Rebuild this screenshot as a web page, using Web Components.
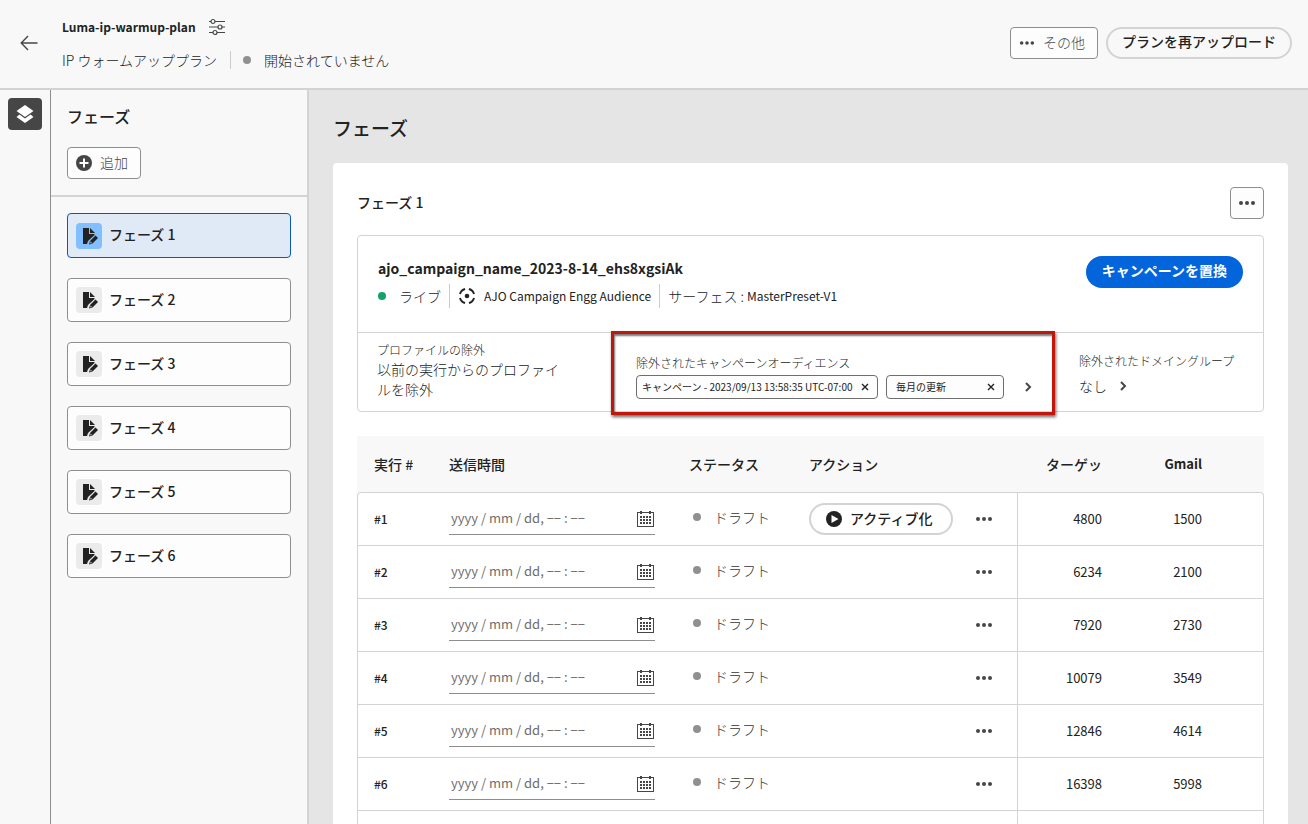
<!DOCTYPE html>
<html lang="ja">
<head>
<meta charset="utf-8">
<meta name="viewport" content="width=device-width, initial-scale=1">
<title>Luma-ip-warmup-plan</title>
<style>
  html, body { height: 100%; margin: 0; }
  body {
    font: 14px/20px "Noto Sans CJK JP", "Noto Sans", sans-serif;
    color: #222;
    background: #f8f8f8;
    --line: #d3d3d3;
    --edge: #8e8e8e;
    --soft: #464646;
    --accent: #0265dc;
  }
</style>
</head>
<body>
<warmup-app></warmup-app>

<script>
const define = (name, html, setup) => {
  const template = document.createElement('template');
  template.innerHTML = '<style>*,*::before,*::after{box-sizing:border-box}h1,h2,h3,p{margin:0;font-size:inherit;font-weight:inherit}button,input{font:inherit;color:inherit;margin:0}button{cursor:pointer}</style>' + html;
  customElements.define(name, class extends HTMLElement {
    constructor() {
      super();
      this.attachShadow({ mode: 'open' }).append(template.content.cloneNode(true));
    }
    connectedCallback() {
      if (setup && !this.ready) { this.ready = true; setup(this, this.shadowRoot); }
    }
  });
};

/* ---------- icons ---------- */
const icons = {
  back: [18, '<path d="M17.500 9H1.500M8 2 1.200 9 8 16" fill="none" stroke="currentColor" stroke-width="1.400"/>'],
  sliders: [18, '<g fill="none" stroke="currentColor" stroke-width="1.200"><path d="M1 3.500h2M7 3.500h10M1 9h9M14 9h3M1 14.500h4M9 14.500h8"/><circle cx="5" cy="3.500" r="2"/><circle cx="12" cy="9" r="2"/><circle cx="7" cy="14.500" r="2"/></g>'],
  layers: [18, '<path d="M9 0 17.500 6 9 12 .5 6z" fill="currentColor"/><path d="M3.500 9.500.5 12 9 18l8.500-6-3-2.500L9 13.500z" fill="currentColor"/>'],
  add: [16, '<circle cx="8" cy="8" r="8" fill="currentColor"/><path d="M8 3.500v9M3.500 8h9" stroke="#fff" stroke-width="2"/>'],
  more: [18, '<g fill="currentColor"><circle cx="3" cy="9" r="2"/><circle cx="9" cy="9" r="2"/><circle cx="15" cy="9" r="2"/></g>'],
  edit: [18, '<path d="M3 1h6v6h5.500v1L8 14l-1 3H3z" fill="currentColor"/><path d="M10 1v5h5z" fill="currentColor"/><path d="m15.500 8.500 2.500 2.500-5.500 5.500-3.500 1 1-3.500z" fill="currentColor"/><path d="m10.500 14.300 1.700 1.700-2 .6z" fill="#aaa"/>'],
  target: [18, '<circle cx="9" cy="9" r="2.300" fill="currentColor"/><circle cx="9" cy="9" r="7.300" fill="none" stroke="currentColor" stroke-width="1.900" pathLength="80" stroke-dasharray="13 7" stroke-dashoffset="-3.500"/>'],
  calendar: [18, '<g fill="currentColor" shape-rendering="crispEdges"><path d="M0 2h17v15H0zM1 3v13h15V3z" fill-rule="evenodd"/><path d="M3 1h2v3H3zM12 1h2v3h-2z"/><path d="M3 6h2v2H3zM6 6h2v2H6zM9 6h2v2H9zM12 6h2v2h-2zM3 9h2v2H3zM6 9h2v2H6zM9 9h2v2H9zM12 9h2v2h-2zM3 12h2v2H3zM6 12h2v2H6zM9 12h2v2H9zM12 12h2v2h-2z"/></g>'],
  play: [16, '<circle cx="8" cy="8" r="8" fill="currentColor"/><path d="M5.500 4v8L12.500 8z" fill="#fff"/>'],
  cross: [8, '<path d="M1 1l6 6M7 1 1 7" stroke="currentColor" stroke-width="1.400"/>'],
  chevron: [10, '<path d="M3 1l4 4-4 4" fill="none" stroke="currentColor" stroke-width="2"/>']
};
define('ui-icon', '<style>:host{display:inline-flex;flex:none}svg{display:block}</style>', (el, root) => {
  const [box, art] = icons[el.getAttribute('name')];
  const size = el.getAttribute('size') || box;
  root.innerHTML += `<svg width="${size}" height="${size}" viewBox="0 0 ${box} ${box}" aria-hidden="true">${art}</svg>`;
});

/* ---------- small parts ---------- */
define('ui-button', `
<style>
  :host { display: inline-flex; flex: none; }
  button { display: inline-flex; align-items: center; justify-content: center; gap: 8px; height: 32px;
    padding: 0 12px 0 8px; border: 1px solid var(--edge); border-radius: 4px; background: #fdfdfd;
    color: var(--soft); font-weight: 300; white-space: nowrap; }
  ::slotted(span) { padding-bottom: 2px; }
  :host([kind=icon]) button { width: 34px; padding: 0; }
  :host([kind=pill]) button, :host([kind=header]) button { border: 2px solid var(--line); border-radius: 16px; padding: 0 14px; font-weight: 500; color: #222; background: none; }
  :host([kind=pill]) button { padding: 0 19px 0 15px; }
  :host([kind=accent]) button { border: 0; border-radius: 16px; padding: 0 16px; font-weight: 700; color: #fff; background: var(--accent); }
  :host([kind=quiet]) button { border: 0; width: 24px; height: 24px; padding: 0; background: none; }
  :host([kind=header]) ::slotted(span), :host([kind=accent]) ::slotted(span) { padding-bottom: 4px; }
</style>
<button type="button"><slot></slot></button>`, (el, root) => {
  if (el.hasAttribute('label')) root.querySelector('button').setAttribute('aria-label', el.getAttribute('label'));
});

define('status-light', `
<style>
  :host { display: inline-flex; align-items: center; font-weight: 300; white-space: nowrap; }
  i { width: 8px; height: 8px; border-radius: 50%; background: var(--dot, #909090); margin-right: var(--dot-gap, 13px); }
</style>
<i></i><slot></slot>`);

define('ui-tag', `
<style>
  :host { display: inline-flex; align-items: center; justify-content: space-between; gap: 8px; height: 24px;
    padding: 0 8px 0 5px; border: 1px solid #6e6e6e; border-radius: 4px; background: #fdfdfd;
    font-size: 10px; line-height: 16px; white-space: nowrap; }
  button { display: flex; padding: 0; border: 0; background: none; }
</style>
<slot></slot><button type="button" aria-label="削除"><ui-icon name="cross"></ui-icon></button>`);

/* ---------- header ---------- */
define('app-header', `
<style>
  :host { display: block; }
  header { display: flex; align-items: center; height: 90px; padding: 0 16px 2px 20px; border-bottom: 2px solid var(--line); }
  .back { display: flex; padding: 0; border: 0; background: none; color: var(--soft); }
  .plan { flex: 1; display: grid; gap: 13px; margin-left: 24px; }
  .title, .meta, .actions { display: flex; align-items: center; }
  .title { gap: 12px; color: #222; }
  h1 { font-size: 12px; font-weight: 700; }
  .title ui-icon { color: var(--soft); }
  .meta { font-weight: 300; }
  hr { width: 1px; height: 18px; margin: 0 12px 0 13px; border: 0; background: #ccc; }
  .actions { gap: 8px; }
</style>
<header>
  <button class="back" type="button" aria-label="戻る"><ui-icon name="back"></ui-icon></button>
  <div class="plan">
    <div class="title"><h1>Luma-ip-warmup-plan</h1><ui-icon name="sliders"></ui-icon></div>
    <div class="meta"><span>IP ウォームアッププラン</span><hr><status-light>開始されていません</status-light></div>
  </div>
  <div class="actions">
    <ui-button><ui-icon name="more" size="16"></ui-icon><span>その他</span></ui-button>
    <ui-button kind="header"><span>プランを再アップロード</span></ui-button>
  </div>
</header>`);

/* ---------- left side ---------- */
define('icon-rail', `
<style>
  :host { display: block; flex: none; width: 51px; padding: 8px; border-right: 1px solid var(--edge); box-sizing: border-box; }
  button { display: grid; place-items: center; width: 34px; height: 32px; padding: 0; border: 0; border-radius: 4px; background: #464646; color: #fff; }
</style>
<button type="button" aria-label="フェーズ"><ui-icon name="layers"></ui-icon></button>`);

define('phase-item', `
<style>
  :host { display: block; }
  button { display: flex; align-items: center; gap: 7px; width: 100%; height: 44px; padding: 0 8px;
    border: 1px solid var(--edge); border-radius: 4px; background: #fdfdfd; font-weight: 500; text-align: left; }
  .mark { display: grid; place-items: center; width: 26px; height: 26px; border-radius: 4px; background: #ebebeb; }
  .name { padding-bottom: 3px; }
  :host([selected]) button { height: 45px; border-color: #0d58b4; background: #e0eaf7; }
  :host([selected]) .mark { background: #82bfff; }
</style>
<button type="button"><span class="mark"><ui-icon name="edit"></ui-icon></span><span class="name"><slot></slot></span></button>`);

define('phase-sidebar', `
<style>
  :host { display: block; flex: none; width: 258px; border-right: 2px solid var(--line); box-sizing: border-box; }
  .head { padding: 16px 16px 16px; border-bottom: 2px solid var(--line); }
  h2 { margin-bottom: 21px; font-size: 16px; font-weight: 500; }
  nav { display: grid; gap: 20px; padding: 16px; }
</style>
<div class="head"><h2>フェーズ</h2><ui-button><ui-icon name="add"></ui-icon><span>追加</span></ui-button></div>
<nav aria-label="フェーズ">
  <phase-item selected>フェーズ 1</phase-item>
  <phase-item>フェーズ 2</phase-item>
  <phase-item>フェーズ 3</phase-item>
  <phase-item>フェーズ 4</phase-item>
  <phase-item>フェーズ 5</phase-item>
  <phase-item>フェーズ 6</phase-item>
</nav>`);

/* ---------- campaign ---------- */
define('campaign-summary', `
<style>
  :host { display: block; border: 1px solid var(--line); border-radius: 4px; }
  .top { display: flex; justify-content: space-between; align-items: flex-start; height: 97px; padding: 20px; border-bottom: 1px solid var(--line); }
  h3 { font-size: 14px; line-height: 24px; font-weight: 700; }
  .meta { display: flex; align-items: center; height: 32px; font-size: 12px; white-space: nowrap; }
  .meta ui-icon { margin-right: 8px; }
  .meta b { font-weight: 400; }
  .meta span { font-size: 14px; font-weight: 300; }
  status-light { --dot: #12a366; font-size: 14px; }
  hr { width: 1px; height: 24px; margin: 0 8px; border: 0; background: #ccc; }
  .rules { display: grid; grid-template-columns: 253px 1fr 208px; height: 78px; }
  .rule { position: relative; min-width: 0; padding: 8px 48px 0 19px; font-weight: 300; }
  .rule p { font-size: 12px; line-height: 18px; }
  .mid { padding: 21px 0 0 25px; }
  .mid::after { content: ""; position: absolute; inset: -2px 0 -4px 0; border: 3px solid #c0160c; box-shadow: 1px 2px 3px #0009, inset 1px 2px 2px #0008; pointer-events: none; }
  .tags { display: flex; align-items: center; gap: 8px; margin-top: 3px; font-weight: 400; }
  .tags ui-tag:first-child { width: 242px; }
  .tags ui-tag + ui-tag { width: 118px; padding-left: 9px; }
  .tags ui-button { margin-left: 4px; }
  .last { padding: 19px 0 0 24px; white-space: nowrap; }
  .value { display: flex; align-items: center; margin-top: 4px; gap: 4px; color: #222; }
  .rule ui-button { color: var(--soft); }
</style>
<div class="top">
  <div>
    <h3>ajo_campaign_name_2023-8-14_ehs8xgsiAk</h3>
    <div class="meta"><status-light>ライブ</status-light><hr><ui-icon name="target"></ui-icon><b>AJO Campaign Engg Audience</b><hr><span>サーフェス :&nbsp;</span><b>MasterPreset-V1</b></div>
  </div>
  <ui-button kind="accent"><span>キャンペーンを置換</span></ui-button>
</div>
<div class="rules">
  <div class="rule"><p>プロファイルの除外</p><div>以前の実行からのプロファイルを除外</div></div>
  <div class="rule mid"><p>除外されたキャンペーンオーディエンス</p>
    <div class="tags"><ui-tag>キャンペーン - 2023/09/13 13:58:35 UTC-07:00</ui-tag><ui-tag>毎月の更新</ui-tag><ui-button kind="quiet" label="オーディエンスを表示"><ui-icon name="chevron"></ui-icon></ui-button></div></div>
  <div class="rule last"><p>除外されたドメイングループ</p><div class="value">なし<ui-button kind="quiet" label="ドメイングループを表示"><ui-icon name="chevron"></ui-icon></ui-button></div></div>
</div>`);

/* ---------- runs ---------- */
define('run-date', `
<style>
  :host { display: block; }
  label { display: flex; align-items: center; width: 206px; height: 32px; border-bottom: 1px solid var(--edge); color: var(--soft); }
  input { flex: 1; min-width: 0; height: 28px; padding: 0 2px 3px; border: 0; background: none; outline: 0; font-size: 13px; }
  input::placeholder { color: #6e6e6e; opacity: 1; }
</style>
<label><input type="text" aria-label="送信時間" placeholder="yyyy / mm / dd, −− : −−"><ui-icon name="calendar"></ui-icon></label>`);

define('run-table', `
<style>
  :host { display: block; }
  table { width: 100%; table-layout: fixed; border-collapse: separate; border-spacing: 0; }
  th, td { padding: 0 0 0 16px; text-align: left; }
  th { height: 56px; font-weight: 500; background: #f8f8f8; }
  td { height: 53px; border-top: 1px solid var(--line); font-size: 13px; }
  tbody td:first-child { border-left: 1px solid var(--line); }
  thead th:first-child { padding-left: 17px; }
  tbody td:last-child { border-right: 1px solid var(--line); }
  tbody tr:first-child td:first-child { border-top-left-radius: 4px; }
  tbody tr:first-child td:last-child { border-top-right-radius: 4px; }
  td.num { border-left: 1px solid var(--line); }
  .num, .mail { text-align: right; padding: 0 16px 0 0; }
  .mail { padding-right: 61px; }
  th.mail { font-size: 13px; font-weight: 700; padding-right: 62px; }
  status-light { --dot-gap: 13px; padding: 0 4px 5px; font-size: 14px; color: #333; }
  .act { display: flex; align-items: center; justify-content: space-between; padding-right: 21px; }
  .act > :only-child { margin-left: auto; }
  .act ui-button { font-size: 14px; }
  td.run { font-size: 12px; font-weight: 500; }
</style>
<table>
  <colgroup><col style="width:76px"><col style="width:240px"><col style="width:120px"><col><col style="width:101px"><col style="width:146px"></colgroup>
  <thead><tr><th>実行 #</th><th>送信時間</th><th>ステータス</th><th>アクション</th><th class="num">ターゲッ</th><th class="mail">Gmail</th></tr></thead>
  <tbody></tbody>
</table>`, (el, root) => {
  const runs = [[4800, 1500], [6234, 2100], [7920, 2730], [10079, 3549], [12846, 4614], [16398, 5998]];
  const activate = '<ui-button kind="pill"><ui-icon name="play"></ui-icon><span>アクティブ化</span></ui-button>';
  root.querySelector('tbody').innerHTML = runs.map(([target, gmail], i) => `
    <tr><td class="run">#${i + 1}</td><td><run-date></run-date></td><td><status-light>ドラフト</status-light></td>
    <td><div class="act">${i ? '' : activate}<ui-button kind="quiet" label="その他"><ui-icon name="more"></ui-icon></ui-button></div></td>
    <td class="num">${target}</td><td class="mail">${gmail}</td></tr>`).join('')
    + '<tr><td></td><td></td><td></td><td></td><td class="num"></td><td class="mail"></td></tr>';
});

define('phase-card', `
<style>
  :host { display: block; padding: 24px; border-radius: 4px; background: #fff; }
  .head { display: flex; align-items: center; justify-content: space-between; margin-bottom: 16px; }
  h3 { padding-bottom: 2px; font-size: 14px; font-weight: 500; }
  run-table { margin-top: 24px; }
</style>
<div class="head"><h3>フェーズ 1</h3><ui-button kind="icon" label="その他"><ui-icon name="more"></ui-icon></ui-button></div>
<campaign-summary></campaign-summary>
<run-table></run-table>`);

define('warmup-app', `
<style>
  :host { display: flex; flex-direction: column; height: 100vh; overflow: hidden; }
  .body { flex: 1; display: flex; min-height: 0; }
  main { flex: 1; min-width: 0; padding: 24px 20px 0 24px; overflow: auto; scrollbar-width: none; background: #e5e5e5; }
  h2 { margin-bottom: 21px; font-size: 19px; line-height: 28px; font-weight: 500; }
</style>
<app-header></app-header>
<div class="body">
  <icon-rail></icon-rail>
  <phase-sidebar></phase-sidebar>
  <main><h2>フェーズ</h2><phase-card></phase-card></main>
</div>`);
</script>
</body>
</html>
